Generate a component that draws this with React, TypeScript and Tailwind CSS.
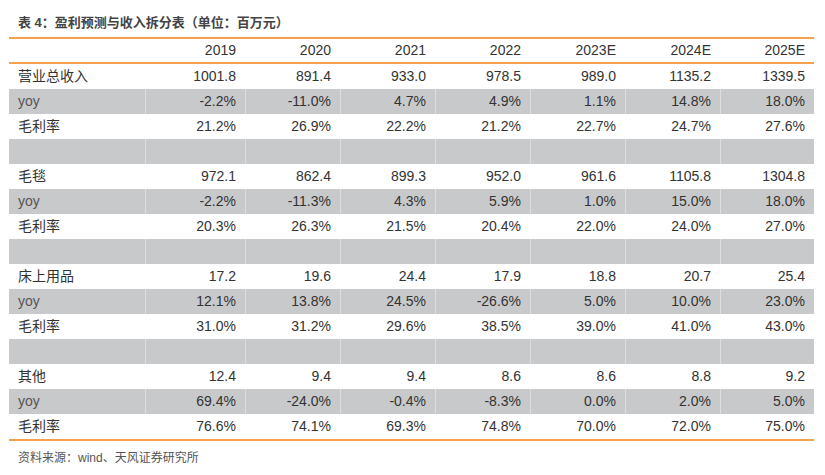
import React from 'react';

const years = ['2019', '2020', '2021', '2022', '2023E', '2024E', '2025E'];

type Row = { label: string; values: string[]; grey?: boolean; muted?: boolean };

const rows: Row[] = [
  { label: '营业总收入', values: ['1001.8', '891.4', '933.0', '978.5', '989.0', '1135.2', '1339.5'] },
  { label: 'yoy', values: ['-2.2%', '-11.0%', '4.7%', '4.9%', '1.1%', '14.8%', '18.0%'], grey: true, muted: true },
  { label: '毛利率', values: ['21.2%', '26.9%', '22.2%', '21.2%', '22.7%', '24.7%', '27.6%'] },
  { label: '', values: ['', '', '', '', '', '', ''], grey: true },
  { label: '毛毯', values: ['972.1', '862.4', '899.3', '952.0', '961.6', '1105.8', '1304.8'] },
  { label: 'yoy', values: ['-2.2%', '-11.3%', '4.3%', '5.9%', '1.0%', '15.0%', '18.0%'], grey: true, muted: true },
  { label: '毛利率', values: ['20.3%', '26.3%', '21.5%', '20.4%', '22.0%', '24.0%', '27.0%'] },
  { label: '', values: ['', '', '', '', '', '', ''], grey: true },
  { label: '床上用品', values: ['17.2', '19.6', '24.4', '17.9', '18.8', '20.7', '25.4'] },
  { label: 'yoy', values: ['12.1%', '13.8%', '24.5%', '-26.6%', '5.0%', '10.0%', '23.0%'], grey: true, muted: true },
  { label: '毛利率', values: ['31.0%', '31.2%', '29.6%', '38.5%', '39.0%', '41.0%', '43.0%'] },
  { label: '', values: ['', '', '', '', '', '', ''], grey: true },
  { label: '其他', values: ['12.4', '9.4', '9.4', '8.6', '8.6', '8.8', '9.2'] },
  { label: 'yoy', values: ['69.4%', '-24.0%', '-0.4%', '-8.3%', '0.0%', '2.0%', '5.0%'], grey: true, muted: true },
  { label: '毛利率', values: ['76.6%', '74.1%', '69.3%', '74.8%', '70.0%', '72.0%', '75.0%'] },
];

const grid = 'grid grid-cols-[136px_100px_95px_95px_95px_95px_95px_94px]';

const App = () => {
  return (
    <div
      className="w-[825px] h-[475px] bg-white text-[#333] overflow-hidden"
      style={{ fontFamily: '"Liberation Sans", "Noto Sans CJK SC", sans-serif' }}
    >
      <div className="pl-[18px] pt-[14px] h-[37px] text-[13px] font-bold text-[#444] leading-[18px]">
        表 4：盈利预测与收入拆分表（单位：百万元）
      </div>

      <div className="ml-[9px] w-[805px] border-t-2 border-[#f5a14e]">
        {/* header */}
        <div className={`${grid} h-[25px] items-center border-b-2 border-[#f5a14e] text-[14px]`}>
          <div />
          {years.map((y) => (
            <div key={y} className="text-right pr-[9px]">
              {y}
            </div>
          ))}
        </div>

        {rows.map((r, i) => (
          <div
            key={i}
            className={`${grid} h-[25px] items-center text-[14px] ${r.grey ? 'bg-[#c8c9cb]' : 'bg-white'}`}
          >
            <div className={`pl-[9px] h-full flex items-center ${r.muted ? 'text-[#555]' : ''}`}>{r.label}</div>
            {r.values.map((v, j) => (
              <div
                key={j}
                className={`h-full flex items-center justify-end pr-[9px] ${r.grey ? 'border-l border-[#dddee0]' : ''}`}
              >
                {v}
              </div>
            ))}
          </div>
        ))}
        <div className="border-t-2 border-[#f5a14e]" />
      </div>

      <div className="pl-[18px] pt-[8px] text-[12px] text-[#555]">资料来源：wind、天风证券研究所</div>
    </div>
  );
};

export default App;
